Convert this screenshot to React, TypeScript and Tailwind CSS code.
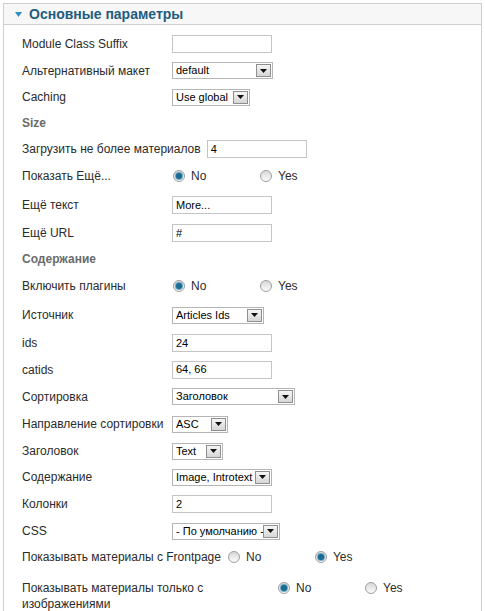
import type { ReactNode } from 'react'

function Row({ h, label, children }: { h: string; label: ReactNode; children?: ReactNode }) {
  return (
    <div className={`flex items-center ${h}`}>
      <div className="min-w-[150px] pr-[6px] whitespace-nowrap">{label}</div>
      {children}
    </div>
  )
}

function Heading({ h, text }: { h: string; text: string }) {
  return (
    <div className={`flex items-center ${h}`}>
      <span className="font-bold text-[#6b6b6b]">{text}</span>
    </div>
  )
}

function TextInput({ value, w = 'w-[100px]' }: { value?: string; w?: string }) {
  return (
    <div className={`h-[18px] border border-[#c4c4c4] bg-white flex items-center pl-[3px] text-[11px] text-black ${w}`}>
      {value}
    </div>
  )
}

function Select({ value, w }: { value: string; w: string }) {
  return (
    <div className={`h-[17px] border border-[#b5b5b5] bg-white flex items-center ${w}`}>
      <span className="flex-1 pl-[3px] text-[11px] text-black whitespace-nowrap overflow-hidden">{value}</span>
      <span className="w-[15px] h-[13px] mr-[1px] border border-[#8f8f8f] bg-gradient-to-b from-[#f6f6f6] to-[#d6d6d6] flex items-center justify-center">
        <svg width="7" height="4" viewBox="0 0 7 4"><path d="M0 0h7L3.5 4z" fill="#111" /></svg>
      </span>
    </div>
  )
}

function Radio({ checked }: { checked?: boolean }) {
  return (
    <span className="w-[12px] h-[12px] rounded-full border border-[#9e9e9e] bg-gradient-to-b from-[#d8d8d8] to-[#fbfbfb] flex items-center justify-center">
      {checked && <span className="w-[6px] h-[6px] rounded-full bg-[#1b6a92] shadow-[0_0_0_1px_#6aa8c8]" />}
    </span>
  )
}

function YesNo({ yes }: { yes?: boolean }) {
  return (
    <div className="flex items-center ml-[1px]">
      <div className="w-[87px] flex items-center gap-[6px]">
        <Radio checked={!yes} />
        <span>No</span>
      </div>
      <div className="flex items-center gap-[6px]">
        <Radio checked={yes} />
        <span>Yes</span>
      </div>
    </div>
  )
}

export default function App() {
  return (
    <div className="min-h-[611px] bg-white pt-[3px] pl-[3px] font-['Liberation_Sans',Arial,sans-serif] text-[12px] text-[#2b2b2b]">
      <div className="w-[479px] border border-[#cfcfcf]">
        <div className="h-[21px] bg-[#f7f7f7] border-b border-[#d0d0d0] flex items-center pl-[11px] gap-[7px]">
          <svg width="7" height="5" viewBox="0 0 7 5"><path d="M0 0h7L3.5 5z" fill="#2c8ec2" /></svg>
          <span className="text-[14px] font-bold text-[#1e5c80]">Основные параметры</span>
        </div>

        <div className="pt-[5px] pl-[18px] pb-[10px]">
          <Row h="h-[27px]" label="Module Class Suffix"><TextInput /></Row>
          <Row h="h-[27px]" label="Альтернативный макет"><Select value="default" w="w-[101px]" /></Row>
          <Row h="h-[26px]" label="Caching"><Select value="Use global" w="w-[78px]" /></Row>
          <Heading h="h-[26px]" text="Size" />
          <Row h="h-[26px]" label="Загрузить не более материалов"><TextInput value="4" /></Row>
          <Row h="h-[28px]" label="Показать Ещё..."><YesNo /></Row>
          <Row h="h-[30px]" label="Ещё текст"><TextInput value="More..." /></Row>
          <Row h="h-[26px]" label="Ещё URL"><TextInput value="#" /></Row>
          <Heading h="h-[26px]" text="Содержание" />
          <Row h="h-[28px]" label="Включить плагины"><YesNo /></Row>
          <Row h="h-[30px]" label="Источник"><Select value="Articles Ids" w="w-[92px]" /></Row>
          <Row h="h-[26px]" label="ids"><TextInput value="24" /></Row>
          <Row h="h-[27px]" label="catids"><TextInput value="64, 66" /></Row>
          <Row h="h-[27px]" label="Сортировка"><Select value="Заголовок" w="w-[123px]" /></Row>
          <Row h="h-[28px]" label="Направление сортировки"><Select value="ASC" w="w-[56px]" /></Row>
          <Row h="h-[26px]" label="Заголовок"><Select value="Text" w="w-[51px]" /></Row>
          <Row h="h-[26px]" label="Содержание"><Select value="Image, Introtext" w="w-[100px]" /></Row>
          <Row h="h-[28px]" label="Колонки"><TextInput value="2" /></Row>
          <Row h="h-[26px]" label="CSS"><Select value="- По умолчанию -" w="w-[108px]" /></Row>
          <Row h="h-[26px]" label="Показывать материалы с Frontpage"><YesNo yes /></Row>
          <div className="flex items-start pt-[10px]">
            <div className="w-[255px] pr-[5px]">
              <div className="w-[200px] leading-[16px]">Показывать материалы только с изображениями</div>
            </div>
            <div className="h-[16px] flex items-center"><YesNo /></div>
          </div>
        </div>
      </div>
    </div>
  )
}
